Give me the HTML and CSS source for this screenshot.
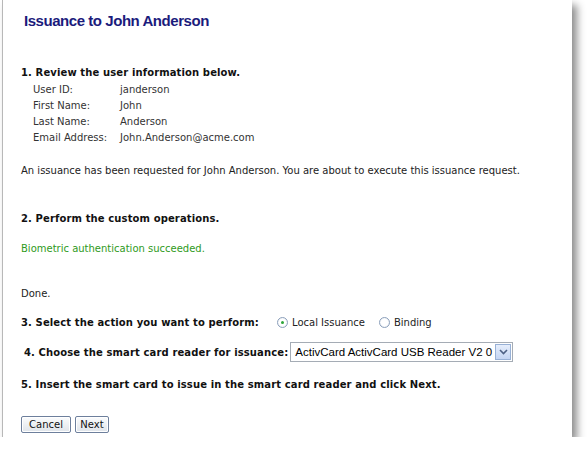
FILE: index.html
```html
<!DOCTYPE html>
<html lang="en">
<head>
  <meta charset="UTF-8" />
  <title>Issuance to John Anderson</title>
  <link rel="stylesheet" href="styles.css">
</head>
<body>
  <div class="panel">
    <h2 class="title">Issuance to John Anderson</h2>

    <div class="step step-1">1. Review the user information below.</div>
    <table class="user-info">
      <tr><td class="lbl">User ID:</td><td>janderson</td></tr>
      <tr><td class="lbl">First Name:</td><td>John</td></tr>
      <tr><td class="lbl">Last Name:</td><td>Anderson</td></tr>
      <tr><td class="lbl">Email Address:</td><td>John.Anderson@acme.com</td></tr>
    </table>

    <p class="note">An issuance has been requested for John Anderson. You are about to execute this issuance request.</p>

    <div class="step step-2">2. Perform the custom operations.</div>
    <p class="success">Biometric authentication succeeded.</p>
    <p class="done">Done.</p>

    <div class="step step-3">
      <span>3. Select the action you want to perform:</span>
      <label class="radio"><span class="dot checked"></span>Local Issuance</label>
      <label class="radio"><span class="dot"></span>Binding</label>
    </div>

    <div class="step step-4">
      <span>4. Choose the smart card reader for issuance:</span>
      <div class="select">
        <span class="select-text">ActivCard ActivCard USB Reader V2 0</span>
        <span class="select-btn">
          <svg width="9" height="6" viewBox="0 0 9 6"><path d="M1 1 L4.5 4.5 L8 1" fill="none" stroke="#4d6185" stroke-width="1.6"/></svg>
        </span>
      </div>
    </div>

    <div class="step step-5">5. Insert the smart card to issue in the smart card reader and click Next.</div>

    <div class="buttons">
      <button type="button" class="btn btn-cancel">Cancel</button>
      <button type="button" class="btn btn-next">Next</button>
    </div>
  </div>
</body>
</html>
```

FILE: styles.css
```css
body {
  margin: 0;
  background-color: #ffffff;
  font-family: "DejaVu Sans", Verdana, sans-serif;
  font-size: 10px;
  color: #222222;
  overflow: hidden;
}

.panel {
  width: 570px;
  height: 437px;
  margin-left: 2px;
  border-left: 1px solid #b8b8b8;
  background-color: #ffffff;
  box-shadow: 5px 5px 8px rgba(0, 0, 0, 0.45);
  padding: 0 0 0 18px;
  box-sizing: border-box;
}

.title {
  margin: 0;
  padding: 12px 0 0 3px;
  font-family: "Liberation Sans", Arial, sans-serif;
  font-size: 15px;
  letter-spacing: -0.45px;
  font-weight: bold;
  color: #1b1b7c;
  height: 65px;
  box-sizing: border-box;
}

.step {
  font-weight: bold;
  color: #111111;
  letter-spacing: 0.12px;
}

.step-1 {
  line-height: 16px;
}

.user-info {
  border-collapse: collapse;
  margin-left: 12px;
}

.user-info td {
  padding: 0;
  height: 16px;
  color: #333333;
}

.user-info .lbl {
  width: 87px;
}

.note {
  margin: 18px 0 0 0;
  line-height: 16px;
}

.step-2 {
  margin-top: 32px;
  line-height: 16px;
}

.success {
  margin: 14px 0 0 0;
  line-height: 16px;
  color: #2f9a22;
}

.done {
  margin: 29px 0 0 0;
  line-height: 16px;
}

.step-3 {
  display: flex;
  align-items: center;
  margin-top: 12px;
  height: 16px;
}

.step-3 > span {
  margin-right: 18px;
}

.radio {
  display: flex;
  align-items: center;
  font-weight: normal;
  letter-spacing: 0;
  color: #222222;
  margin-right: 14px;
}

.dot {
  width: 11px;
  height: 11px;
  border: 1px solid #8ca0bb;
  border-radius: 50%;
  background: radial-gradient(circle, #ffffff 50%, #dfe5ee 100%);
  margin-right: 4px;
  position: relative;
  box-sizing: border-box;
}

.dot.checked::after {
  content: '';
  position: absolute;
  top: 3px;
  left: 3px;
  width: 3px;
  height: 3px;
  border-radius: 50%;
  background-color: #2da53a;
}

.step-4 {
  display: flex;
  align-items: center;
  margin-top: 12px;
  padding-left: 3px;
}

.step-4 > span {
  margin-right: 2px;
}

.select {
  display: flex;
  align-items: center;
  height: 20px;
  border: 1px solid #a5acb5;
  box-sizing: border-box;
  font-weight: normal;
  letter-spacing: 0;
}

.select-text {
  font-family: "Liberation Sans", Arial, sans-serif;
  font-size: 11.5px;
  color: #000000;
  padding: 0 3px 0 4px;
}

.select-btn {
  width: 16px;
  height: 16px;
  margin-right: 1px;
  display: flex;
  align-items: center;
  justify-content: center;
  border: 1px solid #98b1d6;
  box-sizing: border-box;
  background: linear-gradient(#e6eefc, #c4d5f3);
}

.step-5 {
  margin-top: 15px;
  line-height: 16px;
}

.buttons {
  display: flex;
  gap: 4px;
  margin-top: 23px;
}

.btn {
  font-family: "DejaVu Sans", Verdana, sans-serif;
  font-size: 10px;
  color: #111111;
  height: 17px;
  padding: 0;
  border: 1px solid #6d7f9c;
  border-radius: 2px;
  background: linear-gradient(#fbfcfd, #dfe4ea);
  box-shadow: inset 0 0 0 1px #ffffff;
}

.btn-cancel {
  width: 50px;
}

.btn-next {
  width: 34px;
}
```
